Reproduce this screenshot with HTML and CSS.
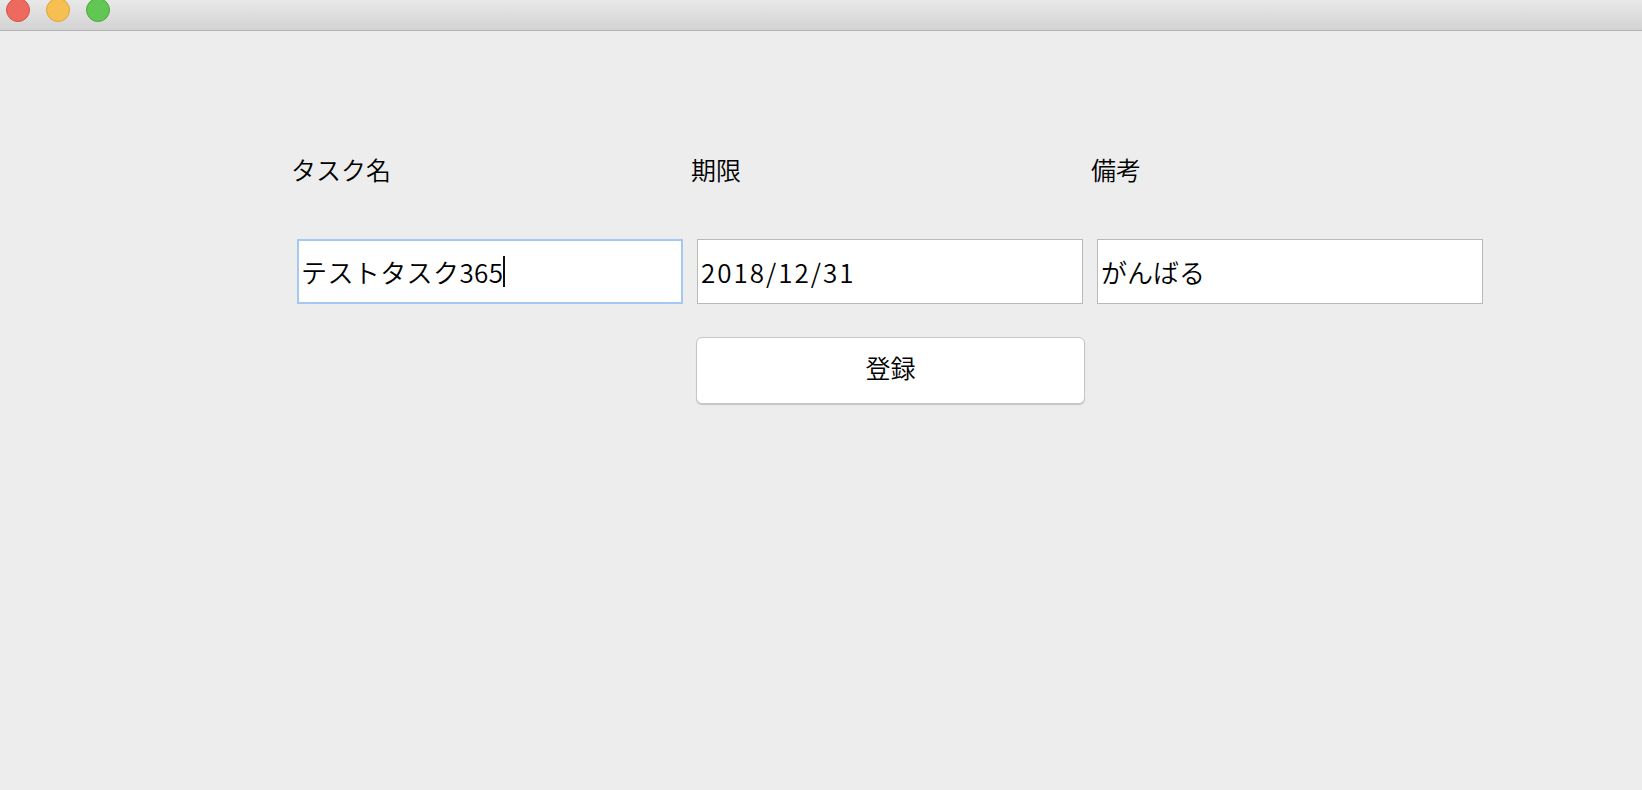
FILE: index.html
```html
<!DOCTYPE html>
<html lang="ja">
<head>
<meta charset="utf-8">
<title>タスク登録</title>
<link rel="stylesheet" href="styles.css">
</head>
<body>
<div class="titlebar">
  <span class="light red"></span>
  <span class="light yellow"></span>
  <span class="light green"></span>
</div>
<main class="form">
  <div class="label">タスク名</div>
  <div class="label">期限</div>
  <div class="label">備考</div>
  <div class="field focused">テストタスク365<span class="caret"></span></div>
  <div class="field date">2018/12/31</div>
  <div class="field">がんばる</div>
  <div class="spacer"></div>
  <button class="submit" type="button">登録</button>
</main>
</body>
</html>
```

FILE: styles.css
```css
html, body {
  margin: 0;
  padding: 0;
  height: 100%;
}

body {
  background: #ededed;
  font-family: "Noto Sans CJK JP", sans-serif;
  font-weight: 350;
  color: #000;
  overflow: hidden;
}

.titlebar {
  height: 30px;
  border-bottom: 1px solid #b3b3b3;
  background: linear-gradient(#e8e8e8, #d3d3d3);
  display: flex;
  align-items: flex-start;
  gap: 16px;
  padding-left: 6px;
}

.light {
  width: 22px;
  height: 22px;
  border-radius: 50%;
  margin-top: -2px;
  border: 1px solid transparent;
}

.red { background: #ee6a5f; border-color: #d3544a; }
.yellow { background: #f6bf4f; border-color: #dca33d; }
.green { background: #62c655; border-color: #4fa73f; }

.form {
  display: grid;
  grid-template-columns: repeat(3, 386px);
  column-gap: 14px;
  padding: 120px 0 0 297px;
}

.label {
  font-size: 25px;
  line-height: 36px;
  margin-left: -6px;
  margin-bottom: 52px;
}

.field {
  box-sizing: border-box;
  height: 65px;
  background: #fff;
  border: 1px solid #b9b9b9;
  padding: 0 3px 1px;
  display: flex;
  align-items: center;
  font-family: "Noto Sans CJK JP", sans-serif;
  font-weight: 350;
  font-size: 26px;
  white-space: nowrap;
}

.field.date {
  letter-spacing: 2px;
}

.field.focused {
  border: 2px solid #a3c8f1;
  padding: 0 2px 1px;
  letter-spacing: 0.4px;
}

.caret {
  display: inline-block;
  width: 2px;
  height: 31px;
  background: #111;
  margin-left: 0;
}

.spacer {
  height: 1px;
}

.submit {
  box-sizing: border-box;
  width: 389px;
  height: 67px;
  margin: 33px 0 0 -1px;
  background: #fff;
  border: 1px solid #c6c6c6;
  border-radius: 6px;
  box-shadow: 0 1px 1px rgba(0, 0, 0, 0.18);
  font-family: "Noto Sans CJK JP", sans-serif;
  font-weight: 350;
  font-size: 25px;
  color: #000;
  padding: 0 0 8px;
}
```
